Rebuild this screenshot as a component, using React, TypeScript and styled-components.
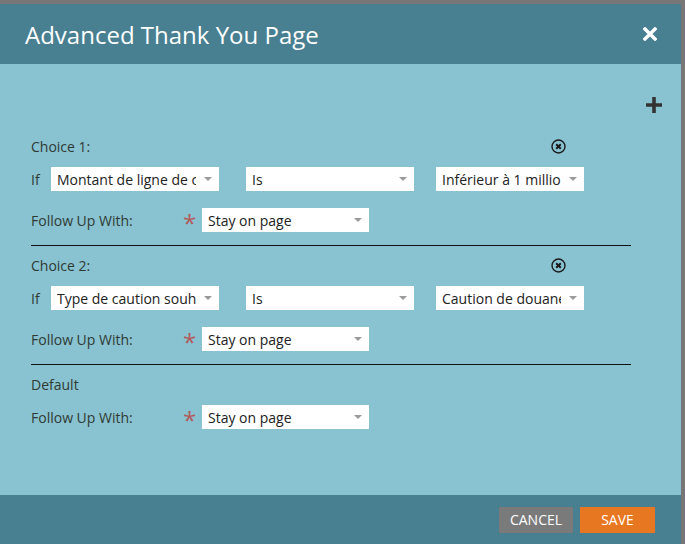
import React from 'react';
import styled, { createGlobalStyle } from 'styled-components';

const GlobalStyle = createGlobalStyle`
  html, body {
    margin: 0;
    padding: 0;
    background: #787677;
    font-family: 'Open Sans', 'Liberation Sans', sans-serif;
  }
`;

const Page = styled.div`
  width: 685px;
  height: 544px;
  padding-top: 4px;
  box-sizing: border-box;
  overflow: hidden;
`;

const Dialog = styled.div`
  width: 681px;
  display: flex;
  flex-direction: column;
`;

const Header = styled.div`
  height: 60px;
  background: #487f91;
  display: flex;
  align-items: center;
  justify-content: space-between;
  padding: 0 24px 0 25px;
  box-sizing: border-box;
`;

const Title = styled.h1`
  margin: 0;
  font-size: 24px;
  font-weight: 400;
  color: #fff;
`;

const Body = styled.div`
  height: 431px;
  background: #89c3d2;
  padding: 32px 18px 0 31px;
  box-sizing: border-box;
  display: flex;
  flex-direction: column;
`;

const Toolbar = styled.div`
  display: flex;
  justify-content: flex-end;
  height: 18px;
  margin-bottom: 22px;
`;

const Sections = styled.div`
  width: 600px;
  display: flex;
  flex-direction: column;
`;

const SectionHead = styled.div`
  height: 20px;
  display: flex;
  align-items: center;
  justify-content: space-between;
  padding-right: 65px;
`;

const Label = styled.span`
  font-size: 14px;
  color: #2f3a33;
`;

const Row = styled.div<{ $top: number }>`
  height: 24px;
  margin-top: ${p => p.$top}px;
  display: flex;
  align-items: center;
`;

const IfLabel = styled(Label)`
  width: 20px;
`;

const FollowLabel = styled(Label)`
  width: 152px;
`;

const Star = styled.span`
  width: 19px;
  font-size: 24px;
  line-height: 24px;
  height: 24px;
  padding-top: 3px;
  box-sizing: border-box;
  color: #b25a5a;
`;

const Select = styled.div<{ $w: number; $gap?: number }>`
  width: ${p => p.$w}px;
  margin-left: ${p => p.$gap || 0}px;
  height: 24px;
  background: #fff;
  display: flex;
  align-items: center;
  padding: 0 7px 0 6px;
  box-sizing: border-box;
  font-size: 14px;
  color: #222;
`;

const SelectText = styled.span`
  flex: 1;
  overflow: hidden;
  white-space: nowrap;
  margin-right: 8px;
`;

const Caret = styled.span`
  width: 0;
  height: 0;
  border-left: 4px solid transparent;
  border-right: 4px solid transparent;
  border-top: 4px solid #9a9a9a;
`;

const Divider = styled.div`
  height: 1px;
  background: #111;
  margin: 13px 0 9px;
`;

const Footer = styled.div`
  height: 49px;
  background: #487f91;
  display: flex;
  align-items: center;
  justify-content: flex-end;
  gap: 7px;
  padding-right: 26px;
`;

const Button = styled.button<{ $primary?: boolean }>`
  height: 26px;
  width: ${p => (p.$primary ? 75 : 74)}px;
  border: none;
  padding: 0;
  background: ${p => (p.$primary ? '#e87722' : '#7a7a7a')};
  color: #fff;
  font-family: 'Open Sans', 'Liberation Sans', sans-serif;
  font-size: 14px;
  text-transform: uppercase;
`;

const Drop = ({ w, gap, text }: { w: number; gap?: number; text: string }) => (
  <Select $w={w} $gap={gap}>
    <SelectText>{text}</SelectText>
    <Caret />
  </Select>
);

const CloseIcon = () => (
  <svg width="14" height="14" viewBox="0 0 14 14">
    <path d="M2 2 L12 12 M12 2 L2 12" stroke="#fff" strokeWidth="3.4" strokeLinecap="square" />
  </svg>
);

const PlusIcon = () => (
  <svg width="18" height="18" viewBox="0 0 18 18">
    <path d="M9 1 V17 M1 9 H17" stroke="#333" strokeWidth="3.6" />
  </svg>
);

const RemoveIcon = () => (
  <svg width="15" height="15" viewBox="0 0 15 15">
    <circle cx="7.5" cy="7.5" r="6.5" fill="none" stroke="#1a1a1a" strokeWidth="1.4" />
    <path d="M5.2 5.2 L9.8 9.8 M9.8 5.2 L5.2 9.8" stroke="#1a1a1a" strokeWidth="2" />
  </svg>
);

const FollowUp = ({ top }: { top: number }) => (
  <Row $top={top}>
    <FollowLabel>Follow Up With:</FollowLabel>
    <Star>*</Star>
    <Drop w={167} text="Stay on page" />
  </Row>
);

const choices = [
  { name: 'Choice 1:', field: 'Montant de ligne de crédit', value: 'Inférieur à 1 million' },
  { name: 'Choice 2:', field: 'Type de caution souhaitée', value: 'Caution de douane' },
];

export default function App() {
  return (
    <Page>
      <GlobalStyle />
      <Dialog>
        <Header>
          <Title>Advanced Thank You Page</Title>
          <CloseIcon />
        </Header>
        <Body>
          <Toolbar>
            <PlusIcon />
          </Toolbar>
          <Sections>
            {choices.map(c => (
              <React.Fragment key={c.name}>
                <SectionHead>
                  <Label>{c.name}</Label>
                  <RemoveIcon />
                </SectionHead>
                <Row $top={11}>
                  <IfLabel>If</IfLabel>
                  <Drop w={168} text={c.field} />
                  <Drop w={168} gap={27} text="Is" />
                  <Drop w={148} gap={22} text={c.value} />
                </Row>
                <FollowUp top={17} />
                <Divider />
              </React.Fragment>
            ))}
            <SectionHead>
              <Label>Default</Label>
            </SectionHead>
            <FollowUp top={11} />
          </Sections>
        </Body>
        <Footer>
          <Button>Cancel</Button>
          <Button $primary>Save</Button>
        </Footer>
      </Dialog>
    </Page>
  );
}
